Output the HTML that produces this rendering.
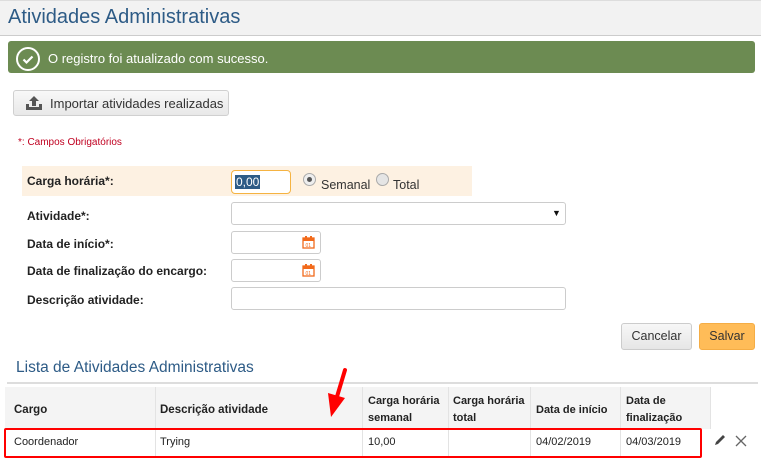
<!DOCTYPE html>
<html><head><meta charset="utf-8"><style>
*{box-sizing:border-box;margin:0;padding:0}
body{width:761px;height:472px;background:#fff;font-family:"Liberation Sans",sans-serif;font-size:12px;color:#222;position:relative;overflow:hidden}
.a{position:absolute}
.inp{position:absolute;background:#fff;border:1px solid #ccc;border-radius:3px}
.lbl{position:absolute;left:27px;font-weight:bold;font-size:12px;color:#222}
.h{position:absolute;font-weight:bold;font-size:11.5px;line-height:17px;white-space:nowrap;color:#222}
.c{position:absolute;top:436px;font-size:11px;white-space:nowrap;color:#222}
.v{position:absolute;top:387px;width:1px;height:70px;background:#e3e3e3}
</style></head><body>
<div class="a" style="left:0;top:0;width:761px;height:36px;background:#f2f2f2;border-top:1px solid #ddd;border-bottom:1px solid #ccc"></div>
<div class="a" style="left:8px;top:6px;font-size:20px;color:#2d5b86">Atividades Administrativas</div>
<div class="a" style="left:8px;top:41px;width:747px;height:32px;background:#6c8b52;border-radius:3px"></div>
<div class="a" style="left:16px;top:47px;width:24px;height:24px;border:2px solid #fff;border-radius:50%"></div>
<svg class="a" style="left:16px;top:47px" width="24" height="24"><path d="M7.5 12.5l3 3 6-6" stroke="#fff" stroke-width="2.2" fill="none"/></svg>
<div class="a" style="left:48px;top:51px;color:#fff;font-size:13px">O registro foi atualizado com sucesso.</div>
<div class="a" style="left:13px;top:90px;width:216px;height:26px;background:linear-gradient(#f8f8f8,#e8e8e8);border:1px solid #d0d0d0;border-radius:3px"></div>
<svg class="a" style="left:24px;top:94px" width="20" height="18"><path d="M2 10v6h16v-6h-3v3H5v-3z" fill="#555"/><path d="M10 2l-5 5h3v5h4V7h3z" fill="#555"/></svg>
<div class="a" style="left:50px;top:96px;font-size:13px;color:#333">Importar atividades realizadas</div>
<div class="a" style="left:18px;top:137px;font-size:10px;color:#c00020">*: Campos Obrigatórios</div>
<div class="a" style="left:22px;top:166px;width:450px;height:30px;background:#fdf1e2"></div>
<div class="lbl" style="top:174px">Carga horária*:</div>
<div class="inp" style="left:231px;top:170px;width:60px;height:24px;border-color:#f5b342;border-radius:4px"></div>
<div class="a" style="left:235px;top:175px;background:#2d5b86;color:#fff;font-size:12px;line-height:14px;padding:0 1px">0,00</div>
<div class="a" style="left:303px;top:173px;width:13px;height:13px;border:1px solid #aaa;border-radius:50%;background:#eee"></div>
<div class="a" style="left:307px;top:177px;width:5px;height:5px;border-radius:50%;background:#555"></div>
<div class="a" style="left:321px;top:178px;font-size:12.5px;color:#333">Semanal</div>
<div class="a" style="left:376px;top:173px;width:13px;height:13px;border:1px solid #aaa;border-radius:50%;background:#e5e5e5"></div>
<div class="a" style="left:393px;top:178px;font-size:12.5px;color:#333">Total</div>
<div class="lbl" style="top:209px">Atividade*:</div>
<div class="inp" style="left:231px;top:202px;width:335px;height:23px"></div>
<div class="a" style="left:552px;top:208px;font-size:9px;color:#111">▼</div>
<div class="lbl" style="top:237px">Data de início*:</div>
<div class="inp" style="left:231px;top:231px;width:90px;height:23px"></div>
<div class="lbl" style="top:264px">Data de finalização do encargo:</div>
<div class="inp" style="left:231px;top:259px;width:90px;height:23px"></div>
<svg class="a" style="left:302px;top:236px" width="13" height="13"><rect x="1" y="2" width="11" height="10" fill="none" stroke="#f26a1b" stroke-width="1.3"/><rect x="1" y="2" width="11" height="3" fill="#f26a1b"/><rect x="3" y="0" width="2" height="3" fill="#f26a1b"/><rect x="8" y="0" width="2" height="3" fill="#f26a1b"/><text x="3.5" y="11" font-size="5" fill="#f26a1b" font-family="Liberation Sans">01</text></svg>
<svg class="a" style="left:302px;top:264px" width="13" height="13"><rect x="1" y="2" width="11" height="10" fill="none" stroke="#f26a1b" stroke-width="1.3"/><rect x="1" y="2" width="11" height="3" fill="#f26a1b"/><rect x="3" y="0" width="2" height="3" fill="#f26a1b"/><rect x="8" y="0" width="2" height="3" fill="#f26a1b"/><text x="3.5" y="11" font-size="5" fill="#f26a1b" font-family="Liberation Sans">01</text></svg>
<div class="lbl" style="top:293px">Descrição atividade:</div>
<div class="inp" style="left:231px;top:287px;width:335px;height:23px"></div>
<div class="a" style="left:621px;top:323px;width:71px;height:27px;background:linear-gradient(#f7f7f7,#e6e6e6);border:1px solid #ccc;border-radius:3px;text-align:center;line-height:25px;font-size:12.5px;color:#333">Cancelar</div>
<div class="a" style="left:699px;top:323px;width:56px;height:27px;background:#ffbc58;border:1px solid #f5ad45;border-radius:3px;text-align:center;line-height:25px;font-size:12.5px;color:#333">Salvar</div>
<div class="a" style="left:16px;top:359px;font-size:15.5px;color:#2d5b86">Lista de Atividades Administrativas</div>
<div class="a" style="left:7px;top:382px;width:751px;height:2px;background:#ddd"></div>
<div class="a" style="left:5px;top:387px;width:705px;height:42px;background:#f4f4f4"></div>
<div class="v" style="left:155px"></div><div class="v" style="left:362px"></div><div class="v" style="left:448px"></div><div class="v" style="left:530px"></div><div class="v" style="left:620px"></div><div class="v" style="left:710px;height:42px"></div>
<div class="h" style="left:14px;top:402px">Cargo</div>
<div class="h" style="left:160px;top:402px">Descrição atividade</div>
<div class="h" style="left:368px;top:393px;font-size:11px">Carga horária<br>semanal</div>
<div class="h" style="left:453px;top:393px;font-size:11px">Carga horária<br>total</div>
<div class="h" style="left:536px;top:402px;font-size:11px">Data de início</div>
<div class="h" style="left:626px;top:393px;font-size:11px">Data de<br>finalização</div>
<div class="c" style="left:14px">Coordenador</div>
<div class="c" style="left:160px">Trying</div>
<div class="c" style="left:368px">10,00</div>
<div class="c" style="left:536px">04/02/2019</div>
<div class="c" style="left:626px">04/03/2019</div>
<div class="a" style="left:4px;top:428px;width:698px;height:30px;border:2.5px solid #f00;border-radius:2px"></div>
<svg class="a" style="left:712px;top:432px" width="16" height="16"><path d="M3 13l1-3 7-7 2 2-7 7z" fill="#444"/></svg>
<svg class="a" style="left:734px;top:434px" width="14" height="14"><path d="M2 2l10 10M12 2L2 12" stroke="#666" stroke-width="1.3"/></svg>
<svg class="a" style="left:320px;top:365px" width="40" height="60"><path d="M25 5L16 35" stroke="#f00" stroke-width="4" stroke-linecap="round"/><path d="M8 28l3 24 14-19z" fill="#f00"/></svg>
</body></html>
